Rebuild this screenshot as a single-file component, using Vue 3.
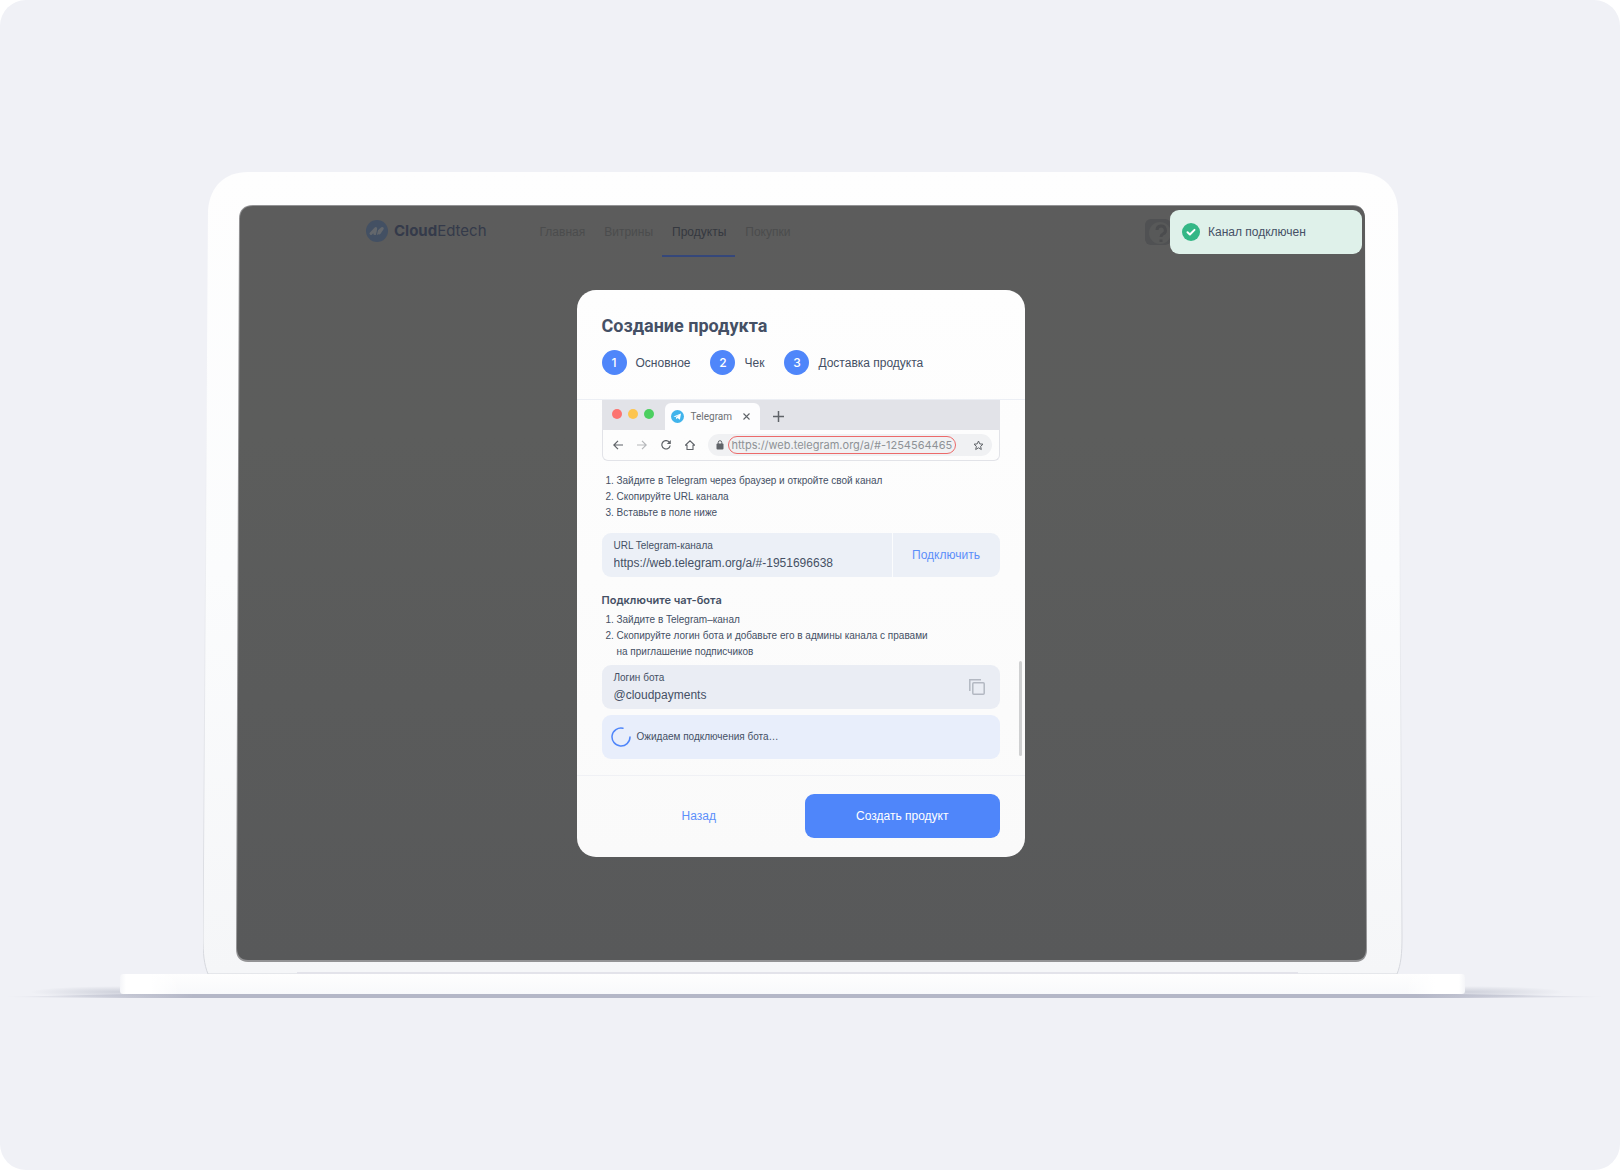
<template>
  <div class="page">
    <div class="laptop">
      <svg class="lid-shape" viewBox="0 0 1200 802" preserveAspectRatio="none" aria-hidden="true">
        <defs>
          <linearGradient id="lid" x1="0" y1="0" x2="0" y2="1">
            <stop offset="0" stop-color="#fefefe" />
            <stop offset="0.5" stop-color="#fbfcfd" />
            <stop offset="1" stop-color="#f5f6f8" />
          </linearGradient>
          <linearGradient id="edge" x1="0" y1="0" x2="0" y2="1">
            <stop offset="0.2" stop-color="#e3e5ea" stop-opacity="0" />
            <stop offset="1" stop-color="#d5d7dd" />
          </linearGradient>
          <linearGradient id="glass" x1="0" y1="0" x2="0" y2="1">
            <stop offset="0" stop-color="#5c5c5c" />
            <stop offset="0.3" stop-color="#5c5d5c" />
            <stop offset="1" stop-color="#58595a" />
          </linearGradient>
        </defs>
        <path
          d="M45 0H1153C1178 0 1194 14 1195 38L1199 765C1199 782 1198 792 1194 802H5C1 792 0 782 0 765L5 38C7 14 22 0 45 0Z"
          fill="url(#lid)"
          stroke="url(#edge)"
        />
        <path
          d="M50 33H1150C1158 33 1162 38 1162 47L1164 778C1164 785 1160 790 1153 790H45C37 790 33 785 33 777L36 47C36 38 41 33 50 33Z"
          fill="#939395"
        />
        <path
          d="M50 34H1150C1158 34 1162 38 1162 47L1163 776C1163 784 1160 788 1153 788H45C38 788 34 784 34 776L37 47C37 38 42 34 50 34Z"
          fill="url(#glass)"
        />
        <path d="M94 800H1095V802H94Z" fill="#e3e3ea" />
      </svg>

      <div class="screen">
        <header class="topbar">
          <a class="logo" href="#">
            <svg width="22" height="22" viewBox="0 0 22 22">
              <circle cx="11" cy="11" r="11" fill="#435063" />
              <path
                d="M5 13.500L9.800 8.500L8.800 13.600M10.500 13.500L16.300 8.500L13.300 13"
                fill="none"
                stroke="#63676c"
                stroke-width="3"
                stroke-linecap="round"
                stroke-linejoin="round"
              />
              <path d="M10.200 15.500L12.600 6" stroke="#435063" stroke-width="1" />
            </svg>
            <span><b>Cloud</b>Edtech</span>
          </a>
          <nav class="menu">
            <a
              v-for="item in menu"
              :key="item"
              href="#"
              :class="{ active: item === current }"
            >{{ item }}</a>
          </nav>
          <button class="help" aria-label="?">
            <svg width="26" height="26" viewBox="0 0 26 26">
              <rect width="26" height="26" rx="6" fill="#505153" />
              <circle cx="15" cy="14" r="11" fill="#585959" />
              <path
                d="M12 11a4.200 4.200 0 1 1 6 4c-1.500.8-2 1.500-2 3M16 20.500v2.500"
                fill="none"
                stroke="#4b4c4e"
                stroke-width="3"
              />
            </svg>
          </button>
        </header>

        <div class="toast" role="status">
          <svg width="18" height="18" viewBox="0 0 18 18">
            <circle cx="9" cy="9" r="9" fill="#34b786" />
            <path
              d="M5.500 9.200l2.400 2.300 4.600-4.600"
              fill="none"
              stroke="#fff"
              stroke-width="2"
              stroke-linecap="round"
              stroke-linejoin="round"
            />
          </svg>
          <span>Канал подключен</span>
        </div>

        <main class="modal" role="dialog" aria-labelledby="title">
          <div class="modal-head">
            <h1 id="title">Создание продукта</h1>
            <ol class="steps">
              <li v-for="(step, i) in steps" :key="step">
                <span class="num">{{ i + 1 }}</span>{{ step }}
              </li>
            </ol>
          </div>

          <div class="modal-body">
            <div class="browser">
              <div class="tabs">
                <span class="dot red"></span>
                <span class="dot yellow"></span>
                <span class="dot green"></span>
                <div class="tab">
                  <svg width="13" height="13" viewBox="0 0 13 13">
                    <circle cx="6.500" cy="6.500" r="6.500" fill="#41b4ec" />
                    <path d="M2.500 6.500L10 3.500 8.900 9.700 6.500 8 5.300 9.200 5 7.300 8 4.900 4.300 7.100Z" fill="#fff" />
                  </svg>
                  <span>Telegram</span>
                  <svg class="close" width="7" height="7" viewBox="0 0 7 7">
                    <path d="M.5.5l6 6M6.500.5l-6 6" stroke="#5f6368" stroke-width="1.100" />
                  </svg>
                </div>
                <svg class="plus" width="11" height="11" viewBox="0 0 11 11">
                  <path d="M5.500 0v11M0 5.500h11" stroke="#5f6368" stroke-width="1.500" />
                </svg>
              </div>
              <div class="toolbar">
                <svg width="10" height="10" viewBox="0 0 10 10">
                  <path d="M10 5H1M5 .8L.8 5 5 9.200" fill="none" stroke="#5f6368" stroke-width="1.200" />
                </svg>
                <svg width="10" height="10" viewBox="0 0 10 10">
                  <path d="M0 5H9M5 .8L9.200 5 5 9.200" fill="none" stroke="#b5b7ba" stroke-width="1.200" />
                </svg>
                <svg width="10" height="10" viewBox="0 0 10 10">
                  <path d="M8.600 2.500A4.200 4.200 0 1 0 9.200 5.500" fill="none" stroke="#5f6368" stroke-width="1.200" />
                  <path d="M9.800 0v4h-4Z" fill="#5f6368" />
                </svg>
                <svg width="10" height="10" viewBox="0 0 10 10">
                  <path d="M.3 5.300L5 .8l4.700 4.500H8v4.200H2V5.300Z" fill="none" stroke="#5f6368" stroke-width="1.100" />
                </svg>
                <div class="address">
                  <svg width="8" height="10" viewBox="0 0 8 10">
                    <rect x="0.500" y="3.500" width="7" height="6" rx="1" fill="#5f6368" />
                    <path d="M2.200 4V2.500a1.800 1.800 0 0 1 3.600 0V4" fill="none" stroke="#5f6368" stroke-width="1" />
                  </svg>
                  <span class="highlight">https://web.telegram.org/a/#-1254564465</span>
                  <svg class="star" width="11" height="11" viewBox="0 0 11 11">
                    <path
                      d="M5.500 1l1.300 2.900 3.200.3-2.400 2.100.7 3.200-2.800-1.700-2.800 1.700.7-3.200L1 4.200l3.200-.3Z"
                      fill="none"
                      stroke="#5f6368"
                    />
                  </svg>
                </div>
              </div>
            </div>

            <ol class="hints">
              <li>Зайдите в Telegram через браузер и откройте свой канал</li>
              <li>Скопируйте URL канала</li>
              <li>Вставьте в поле ниже</li>
            </ol>

            <div class="field url">
              <div class="field-text">
                <label for="url">URL Telegram-канала</label>
                <input id="url" v-model="url" type="text" />
              </div>
              <button class="connect">Подключить</button>
            </div>

            <h2>Подключите чат-бота</h2>
            <ol class="hints second">
              <li>Зайдите в Telegram–канал</li>
              <li>Скопируйте логин бота и добавьте его в админы канала с правами<br />на приглашение подписчиков</li>
            </ol>

            <div class="field bot">
              <div class="field-text">
                <label for="bot">Логин бота</label>
                <input id="bot" :value="bot" type="text" readonly />
              </div>
              <button class="copy" aria-label="Скопировать" @click="copyBot">
                <svg width="16" height="16" viewBox="0 0 16 16" fill="none" stroke="#b3b8c2" stroke-width="1.500">
                  <path d="M.8 12V.8H12" />
                  <rect x="3.800" y="3.800" width="11.400" height="11.400" rx="1" />
                </svg>
              </button>
            </div>

            <div class="waiting">
              <svg width="20" height="20" viewBox="0 0 20 20">
                <path
                  d="M12 1.200A9 9 0 1 0 19 10"
                  fill="none"
                  stroke="#4f86fa"
                  stroke-width="1.500"
                  stroke-linecap="round"
                />
              </svg>
              <span>Ожидаем подключения бота…</span>
            </div>
            <div class="scrollbar"></div>
          </div>

          <div class="modal-foot">
            <button class="back">Назад</button>
            <button class="create">Создать продукт</button>
          </div>
        </main>
      </div>
    </div>

    <div class="base-row">
      <svg class="shadow" viewBox="0 0 1620 24" preserveAspectRatio="none" aria-hidden="true">
        <defs>
          <linearGradient id="line">
            <stop offset="0" stop-color="#b4b7c7" stop-opacity="0" />
            <stop offset="0.12" stop-color="#b4b7c7" />
            <stop offset="0.88" stop-color="#b4b7c7" />
            <stop offset="1" stop-color="#b4b7c7" stop-opacity="0" />
          </linearGradient>
          <radialGradient id="haze">
            <stop offset="0" stop-color="#c6c9d4" stop-opacity="0.8" />
            <stop offset="1" stop-color="#c6c9d4" stop-opacity="0" />
          </radialGradient>
        </defs>
        <path d="M10 20V8H130V20ZM1455 20V8H1600V20Z" fill="#f0f1f6" />
        <ellipse cx="120" cy="18" rx="90" ry="6" fill="url(#haze)" />
        <ellipse cx="1465" cy="18" rx="100" ry="6" fill="url(#haze)" />
        <path d="M0 23L130 20H1455L1610 23L1455 24H130Z" fill="url(#line)" />
      </svg>
      <div class="base"></div>
    </div>
  </div>
</template>

<script setup>
import { ref } from 'vue'

const menu = ['Главная', 'Витрины', 'Продукты', 'Покупки']
const current = ref('Продукты')
const steps = ['Основное', 'Чек', 'Доставка продукта']
const url = ref('https://web.telegram.org/a/#-1951696638')
const bot = ref('@cloudpayments')

function copyBot() {
  navigator.clipboard?.writeText(bot.value)
}
</script>

<style>
body {
  margin: 0;
  background: #fff;
}
</style>

<style scoped>
* {
  box-sizing: border-box;
}

.page {
  min-height: 100vh;
  padding-top: 172px;
  border-radius: 26px;
  background: #f0f1f6;
  color: #455065;
  font-family: 'Liberation Sans', Arial, sans-serif;
  font-size: 12px;
  line-height: 16px;
}

button {
  padding: 0;
  border: none;
  background: none;
  color: inherit;
  font: inherit;
  cursor: pointer;
}
a {
  color: inherit;
  text-decoration: none;
}
h1,
h2,
ol {
  margin: 0;
  padding: 0;
}
svg {
  display: block;
  flex-shrink: 0;
}

.laptop {
  position: relative;
  margin: 0 217px 0 203px;
  padding: 34px 39px 13px 34px;
}
.lid-shape {
  position: absolute;
  inset: 0;
  width: 100%;
  height: 100%;
}
.screen {
  position: relative;
  padding-bottom: 104px;
}

.topbar {
  display: flex;
  align-items: center;
  height: 51px;
  padding: 0 193px 0 129px;
}
.logo {
  display: flex;
  align-items: center;
  gap: 6px;
  padding-bottom: 2px;
  color: #343a4a;
  font-family: Inter, sans-serif;
  font-size: 15px;
}
.logo b {
  font-weight: 700;
}
.menu {
  display: flex;
  align-self: stretch;
  margin-left: 43px;
  flex: 1;
}
.menu a {
  display: flex;
  align-items: center;
  padding: 2px 9px 0 10px;
  border-bottom: 2px solid transparent;
  color: #4b4c4d;
}
.menu a.active {
  border-color: #35477a;
  color: #35383f;
}

.toast {
  position: absolute;
  top: 4px;
  right: 2px;
  display: flex;
  align-items: center;
  gap: 8px;
  width: 192px;
  height: 44px;
  padding: 0 12px;
  border-radius: 9px;
  background: #dff1ea;
}

.modal {
  width: 448px;
  max-width: 100%;
  margin: 33px auto 0;
  border-radius: 19px;
  background: linear-gradient(#fefefe, #fafafa);
}
.modal-head {
  padding: 24px 25px;
  border-bottom: 1px solid #eceff5;
}
h1 {
  font-family: Roboto, sans-serif;
  font-size: 18px;
  font-weight: 700;
  line-height: 24px;
}
.steps {
  display: flex;
  gap: 20px;
  margin-top: 12px;
  list-style: none;
}
.steps li {
  display: flex;
  align-items: center;
  gap: 9px;
}
.num {
  display: flex;
  align-items: center;
  justify-content: center;
  width: 25px;
  height: 25px;
  border-radius: 50%;
  background: #4f86fa;
  color: #fff;
  font-family: Inter, sans-serif;
  font-weight: 500;
}

.modal-body {
  position: relative;
  padding: 0 25px 16px;
  border-bottom: 1px solid #f0f1f5;
}
.scrollbar {
  position: absolute;
  right: 3px;
  bottom: 19px;
  width: 3px;
  height: 95px;
  border-radius: 2px;
  background: #cfd0d1;
}

.browser {
  border: 1px solid #e2e3e8;
  border-top: none;
  border-radius: 0 0 6px 6px;
  font-family: Roboto, sans-serif;
}
.tabs {
  display: flex;
  align-items: flex-end;
  height: 30px;
  padding-left: 9px;
  background: #e2e3e8;
}
.dot {
  width: 10px;
  height: 10px;
  margin: 0 6px 11px 0;
  border-radius: 50%;
}
.red {
  background: #fc7470;
}
.yellow {
  background: #fdc54f;
}
.green {
  background: #4ccf60;
}
.tab {
  display: flex;
  align-items: center;
  width: 95px;
  height: 27px;
  margin-left: 5px;
  padding: 0 10px 0 6px;
  border-radius: 6px 6px 0 0;
  background: #fdfdfe;
  color: #6d7073;
  font-size: 10px;
}
.tab span {
  margin-left: 7px;
}
.close {
  margin-left: auto;
}
.plus {
  margin: 0 0 8px 13px;
}
.toolbar {
  display: flex;
  align-items: center;
  gap: 14px;
  padding: 4px 7px 4px 10px;
}
.address {
  display: flex;
  align-items: center;
  flex: 1;
  height: 22px;
  margin-left: -1px;
  padding: 0 8px;
  border-radius: 11px;
  background: #f0f1f3;
}
.highlight {
  margin-left: 4px;
  padding: 0 3px;
  border: 1px solid #ec6a6a;
  border-radius: 9px;
  color: #8e9196;
  font-family: Inter, sans-serif;
  font-size: 11px;
}
.star {
  margin-left: auto;
}

.hints {
  margin-top: 12px;
  padding-left: 15px;
  font-size: 10px;
  list-style: none;
  counter-reset: hint;
}
.hints li {
  position: relative;
  counter-increment: hint;
}
.hints li::before {
  content: counter(hint) '.';
  position: absolute;
  left: -11px;
}
.hints.second {
  margin-top: 4px;
}

.field {
  display: flex;
  height: 44px;
  border-radius: 9px;
  background: #ecf0f7;
}
.field-text {
  flex: 1;
  min-width: 0;
  display: flex;
  flex-direction: column;
  justify-content: center;
  padding: 0 12px;
}
.field label {
  font-size: 10px;
}
.field input {
  width: 100%;
  height: 18px;
  padding: 0;
  border: none;
  outline: none;
  background: none;
  color: inherit;
  font: inherit;
}
.url {
  margin-top: 12px;
}
.connect {
  width: 108px;
  border-left: 1px solid #fbfcfd;
  color: #5c8ffa;
}
h2 {
  margin-top: 15px;
  font-family: Inter, sans-serif;
  font-size: 11px;
  font-weight: 600;
  line-height: 16px;
}
.bot {
  margin-top: 5px;
  background: #eaedf4;
}
.copy {
  padding: 0 15px;
}
.waiting {
  display: flex;
  align-items: center;
  gap: 6px;
  height: 44px;
  margin-top: 6px;
  padding: 0 9px;
  border-radius: 9px;
  background: #e8eefb;
  font-size: 10px;
}

.modal-foot {
  display: flex;
  gap: 9px;
  padding: 18px 25px 19px;
}
.modal-foot button {
  flex: 1;
  height: 44px;
  border-radius: 9px;
}
.back {
  color: #5c8ffa;
}
.modal-foot .create {
  background: #4f86fa;
  color: #fff;
}

.base-row {
  position: relative;
}
.shadow {
  position: absolute;
  top: 0;
  width: 100%;
  height: 24px;
}
.base {
  position: relative;
  height: 20px;
  margin: 0 155px 0 120px;
  border-radius: 3px;
  background:
    linear-gradient(90deg, #f4f5f8, #fff 6px, #fff 30px, transparent 60px, transparent calc(100% - 60px), #fff calc(100% - 30px), #fff calc(100% - 6px), #f4f5f8),
    linear-gradient(#fefefe, #f8f9fb);
}
</style>
